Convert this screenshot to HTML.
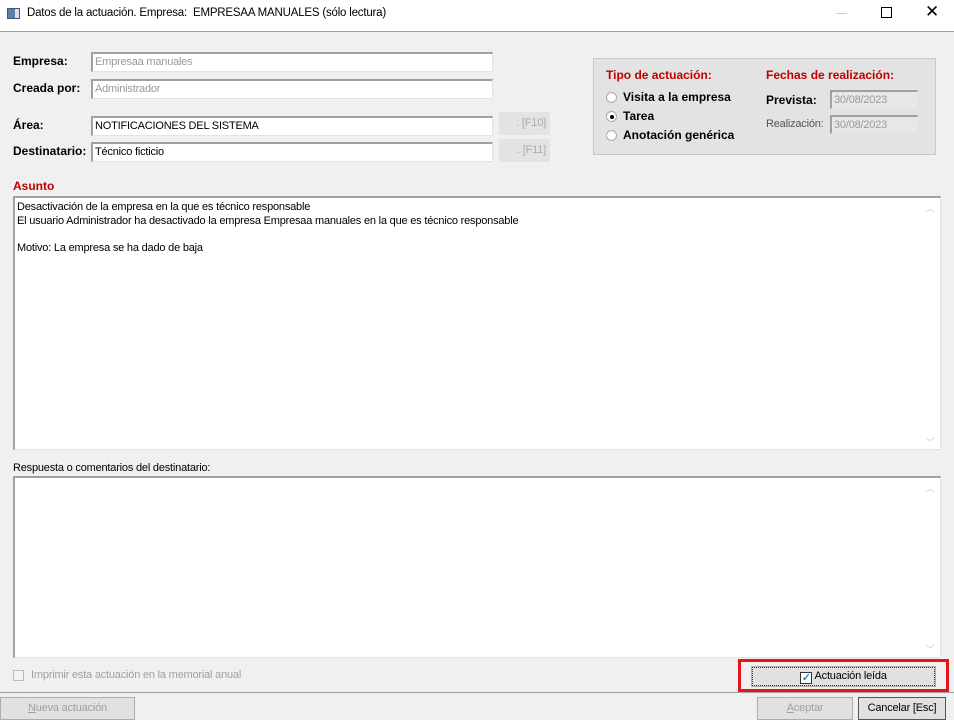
<!DOCTYPE html>
<html><head><meta charset="utf-8"><style>
*{box-sizing:border-box;margin:0;padding:0}
body{width:954px;height:720px;background:#f0f0f0;font-family:"Liberation Sans",sans-serif;font-size:12px;position:relative;overflow:hidden;color:#000}
.a{position:absolute;white-space:nowrap}
.inp{position:absolute;background:#fff;border-top:2px solid #a0a0a0;border-left:2px solid #a0a0a0;border-bottom:1px solid #e3e3e3;border-right:1px solid #e3e3e3;padding-left:2px;line-height:16px;font-size:11px;letter-spacing:-0.2px}
.n{font-size:11px;letter-spacing:-0.2px}
.lbl{font-weight:bold;font-size:12px}
.red{color:#c00000;font-weight:bold}
.btn{position:absolute;background:#e1e1e1;border:1px solid #adadad;text-align:center;font-size:11px;letter-spacing:-0.2px}
</style></head><body>
<div class="a" style="left:0;top:0;width:954px;height:31px;background:#fff"></div>
<div class="a" style="left:7px;top:8px;width:13px;height:11px;background:#5b7fa6;border:1px solid #3a5a80"></div>
<div class="a" style="left:15px;top:9px;width:4px;height:9px;background:#dde"></div>
<div class="a" style="left:27px;top:7px;font-size:11.5px;letter-spacing:-0.2px">Datos de la actuación. Empresa:&nbsp; EMPRESAA MANUALES (sólo lectura)</div>
<div class="a" style="left:836px;top:13px;width:11px;height:1px;background:#ccc"></div>
<div class="a" style="left:881px;top:7px;width:11px;height:11px;border:1px solid #000"></div>
<div class="a" style="left:925px;top:2px;font-size:17px">✕</div>
<div class="a" style="left:0;top:31px;width:954px;height:662px;border-top:1px solid #a0a0a0;border-bottom:1px solid #a0a0a0"></div>

<div class="a lbl" style="left:13px;top:54px">Empresa:</div>
<div class="inp" style="left:91px;top:52px;width:402px;height:20px;color:#999">Empresaa manuales</div>
<div class="a lbl" style="left:13px;top:81px">Creada por:</div>
<div class="inp" style="left:91px;top:79px;width:402px;height:20px;color:#999">Administrador</div>
<div class="a lbl" style="left:13px;top:118px">Área:</div>
<div class="inp" style="left:91px;top:116px;width:402px;height:20px">NOTIFICACIONES DEL SISTEMA</div>
<div class="btn" style="left:499px;top:112px;width:51px;height:23px;border:none;background:#e3e3e3;color:#aaa;line-height:23px;text-align:right;padding-right:4px">. [F10]</div>
<div class="a lbl" style="left:13px;top:144px">Destinatario:</div>
<div class="inp" style="left:91px;top:142px;width:402px;height:20px">Técnico ficticio</div>
<div class="btn" style="left:499px;top:139px;width:51px;height:23px;border:none;background:#e3e3e3;color:#aaa;line-height:23px;text-align:right;padding-right:4px">. [F11]</div>

<div class="a" style="left:593px;top:58px;width:343px;height:97px;background:#e3e3e3;border:1px solid #c8c8c8"></div>
<div class="a red" style="left:606px;top:68px">Tipo de actuación:</div>
<div class="a red" style="left:766px;top:68px">Fechas de realización:</div>
<div class="a" style="left:606px;top:92px;width:11px;height:11px;border-radius:50%;background:#fff;border:1px solid #aaa"></div>
<div class="a lbl" style="left:623px;top:90px">Visita a la empresa</div>
<div class="a" style="left:606px;top:111px;width:11px;height:11px;border-radius:50%;background:#fff;border:1px solid #aaa"></div>
<div class="a" style="left:610px;top:115px;width:4px;height:4px;border-radius:50%;background:#000"></div>
<div class="a lbl" style="left:623px;top:109px">Tarea</div>
<div class="a" style="left:606px;top:130px;width:11px;height:11px;border-radius:50%;background:#fff;border:1px solid #aaa"></div>
<div class="a lbl" style="left:623px;top:128px">Anotación genérica</div>
<div class="a lbl" style="left:766px;top:93px">Prevista:</div>
<div class="inp" style="left:830px;top:90px;width:88px;height:19px;background:#e8e8e8;color:#999">30/08/2023</div>
<div class="a n" style="left:766px;top:118px;color:#555">Realización:</div>
<div class="inp" style="left:830px;top:115px;width:88px;height:19px;background:#e8e8e8;color:#999">30/08/2023</div>

<div class="a red" style="left:13px;top:179px">Asunto</div>
<div class="inp" style="left:13px;top:196px;width:928px;height:254px;line-height:13.5px;padding-top:3px">Desactivación de la empresa en la que es técnico responsable<br>El usuario Administrador ha desactivado la empresa Empresaa manuales en la que es técnico responsable<br><br>Motivo: La empresa se ha dado de baja</div>
<div class="a" style="left:925px;top:200px;color:#ccc;font-size:10px">︿</div>
<div class="a" style="left:925px;top:434px;color:#ccc;font-size:10px">﹀</div>
<div class="a n" style="left:13px;top:462px">Respuesta o comentarios del destinatario:</div>
<div class="inp" style="left:13px;top:476px;width:928px;height:182px"></div>
<div class="a" style="left:925px;top:480px;color:#ccc;font-size:10px">︿</div>
<div class="a" style="left:925px;top:641px;color:#ccc;font-size:10px">﹀</div>

<div class="a" style="left:13px;top:670px;width:11px;height:11px;border:1px solid #bbb;background:#f4f4f4"></div>
<div class="a n" style="left:31px;top:669px;color:#a0a0a0">Imprimir esta actuación en la memorial anual</div>
<div class="a" style="left:738px;top:659px;width:211px;height:33px;border:3px solid #e8141c"></div>
<div class="btn" style="left:752px;top:667px;width:183px;height:19px;border:1px dotted #333;outline:1px solid #adadad;line-height:17px">
<span style="display:inline-block;width:12px;height:12px;border:1px solid #333;background:#fff;vertical-align:-2px;color:#1e8fd8;font-size:11px;line-height:10px;font-weight:bold">✓</span> Actuación leída</div>

<div class="btn" style="left:0;top:697px;width:135px;height:23px;line-height:21px;color:#a0a0a0"><u>N</u>ueva actuación</div>
<div class="btn" style="left:757px;top:697px;width:96px;height:23px;line-height:21px;color:#a0a0a0"><u>A</u>ceptar</div>
<div class="btn" style="left:858px;top:697px;width:88px;height:23px;line-height:21px;border-color:#555">Cancelar [Esc]</div>
</body></html>
